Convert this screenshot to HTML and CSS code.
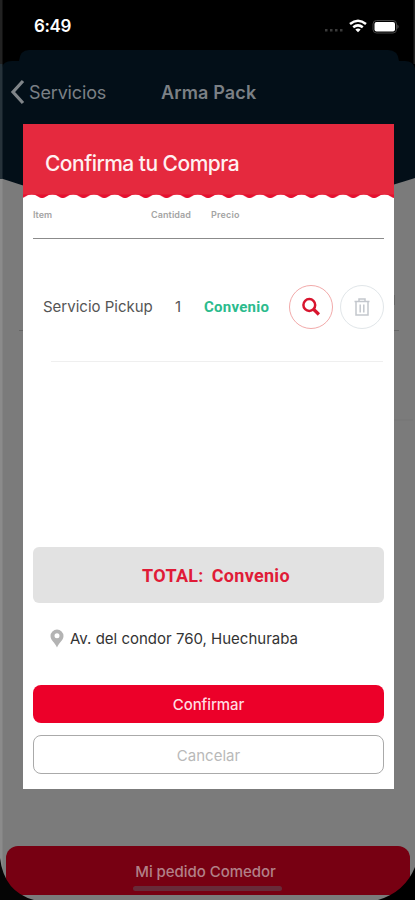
FILE: index.html
```html
<!DOCTYPE html>
<html lang="es">
<head>
<meta charset="utf-8">
<title>Confirma tu Compra</title>
<link rel="stylesheet" href="styles.css">
</head>
<body>
<div class="phone">
  <svg class="scene" viewBox="0 0 415 900" aria-hidden="true">
    <rect width="415" height="900" fill="#7b7b7b"/>
    <path d="M0 0H415V178Q393 185 375 190H40Q20 185 0 178Z" fill="#030f18"/>
    <path d="M0 0H415V68Q413 61 405 61H399Q398 50 388 50H29Q20 50 19 61H12Q3 61 2 68H0Z" fill="#000"/>
    <rect width="2.5" height="64" fill="#222"/>
    <rect y="64" width="2.5" height="115" fill="#26323a"/>
    <rect y="179" width="2.5" height="721" fill="#8b8b8b"/>
    <rect x="413.5" width="1.5" height="64" fill="#222"/>
    <path d="M19 330.500H23M393 330.500H399M394.500 295V305" stroke="#666" fill="none"/>
    <path d="M394 420H413" stroke="#777"/>
  </svg>
  <header class="status">
    <span class="time">6:49</span>
    <svg class="signals" width="78" height="18" viewBox="0 0 78 18" aria-hidden="true">
      <g fill="#3a3a3a"><rect x="3" y="11" width="2.500" height="2.500"/><rect x="8" y="11" width="2.500" height="2.500"/><rect x="13" y="11" width="2.500" height="2.500"/><rect x="18" y="11" width="2.500" height="2.500"/></g>
      <g fill="none" stroke="#fff" stroke-width="2.500"><path d="M28 6Q36 -.6 44 6"/><path d="M31.200 9.300Q36 5.500 40.800 9.300"/></g>
      <path d="M33.300 11.500Q36 9.300 38.700 11.500L36 14.200Z" fill="#fff"/>
      <rect x="51" y="2.500" width="23.500" height="12.500" rx="3.500" fill="none" stroke="#444"/>
      <rect x="52.500" y="4" width="20.500" height="9.500" rx="2" fill="#fff"/>
      <path d="M75.500 6.500Q77.500 8.700 75.500 11Z" fill="#666"/>
    </svg>
  </header>
  <nav class="nav">
    <svg width="16" height="26" viewBox="0 0 16 26" aria-hidden="true"><path d="M14 2L4 13L14 24" fill="none" stroke="#808589" stroke-width="3.200"/></svg>
    <span class="back">Servicios</span>
    <span class="title">Arma Pack</span>
  </nav>
  <footer class="order"><span>Mi pedido Comedor</span><i></i></footer>
  <svg class="corners" viewBox="0 0 415 50" aria-hidden="true"><path d="M0 8Q4 42 34 50H0Z" fill="#050505"/><path d="M415 17Q405 42 378 50H415Z" fill="#000"/></svg>

  <main class="modal">
    <div class="banner"><h1>Confirma tu Compra</h1></div>
    <svg class="wave" width="371" height="8" viewBox="0 0 371 8" aria-hidden="true">
      <defs><pattern id="scallop" x="-1.700" width="20.750" height="8" patternUnits="userSpaceOnUse"><path d="M0 0H20.750V5Q19 5.300 17.500 4Q10.400-.8 3.300 4Q1.700 5.300 0 5Z" fill="#e5102f"/></pattern></defs>
      <rect width="371" height="8" fill="url(#scallop)"/><rect width="371" height="1.500" fill="#e5293e"/>
    </svg>
    <div class="columns"><span>Item</span><span>Cantidad</span><span>Precio</span></div>
    <div class="item">
      <span class="name">Servicio Pickup</span>
      <span class="count">1</span>
      <strong class="price">Convenio</strong>
      <span class="round view"><svg width="20" height="20" viewBox="0 0 20 20" aria-hidden="true"><circle cx="8.300" cy="8" r="5.900" fill="none" stroke="#d8152e" stroke-width="2.500"/><path d="M12.300 12L17.900 17.500" stroke="#d8152e" stroke-width="3.200"/></svg></span>
      <span class="round trash"><svg width="18" height="20" viewBox="0 0 18 20" fill="none" stroke="#c3c7cd" stroke-width="1.500" aria-hidden="true"><path d="M1.500 4.500H16.500M6 4V2H12V4M3 5V18H15V5M7.200 7.500V15.500M10.800 7.500V15.500"/></svg></span>
    </div>
    <div class="total"><span>TOTAL:</span><span class="amount">Convenio</span></div>
    <div class="address">
      <svg width="14" height="19" viewBox="0 0 14 19" aria-hidden="true"><path fill-rule="evenodd" d="M7 .5A6.500 6.500 0 0 1 13.500 7C13.500 11.500 9 13.500 7 18.500C5 13.500.5 11.500.5 7A6.500 6.500 0 0 1 7 .5ZM7 4.300A2.500 2.500 0 1 0 7 9.300A2.500 2.500 0 1 0 7 4.300Z" fill="#b3b3b3"/></svg>
      <span>Av. del condor 760, Huechuraba</span>
    </div>
    <button class="confirm">Confirmar</button>
    <button class="cancel">Cancelar</button>
  </main>
</div>
</body>
</html>
```
FILE: styles.css
```css
* { box-sizing: border-box; }
body { margin: 0; font-family: Inter, sans-serif; }
svg { display: block; flex: none; }
span, strong { white-space: nowrap; }
.phone { position: relative; width: 415px; height: 900px; overflow: hidden; display: flex; flex-direction: column; }
.scene { position: absolute; inset: 0; width: 415px; height: 900px; }
.status { position: relative; height: 54px; display: flex; justify-content: space-between; padding: 16px 14px 0 34px; color: #fff; }
.time { font-size: 17px; line-height: 21px; font-weight: 600; letter-spacing: -.4px; }
.signals { margin: 2px 1px 0 0; }
.nav { position: relative; display: flex; align-items: center; height: 76px; padding-left: 9px; color: #7b8085; font-size: 18px; }
.back { width: 132px; margin-left: 4px; font-size: 18px; letter-spacing: -.15px; }
.title { font-weight: 600; letter-spacing: .15px; }
.order { position: relative; margin: auto 5px 5px 6px; height: 49px; border-radius: 12px; background: #770012; color: #b28088; text-align: center; padding: 16px 5px 0 0; font-size: 15px; line-height: 20px; font-weight: 500; letter-spacing: -.05px; }
.order i { display: block; width: 149px; height: 5px; border-radius: 3px; background: #682b39; margin: 4px auto 0; transform: translateX(2px); }
.corners { position: absolute; bottom: 0; left: 0; width: 415px; height: 50px; }
.modal { position: absolute; left: 23px; top: 124px; width: 371px; height: 665px; background: #fff; display: flex; flex-direction: column; }
.banner { height: 70px; background: #e5293e; padding: 26px 22px 0; }
h1 { margin: 0; color: #fff0f1; font-size: 21px; line-height: 28px; font-weight: 500; letter-spacing: -.53px; white-space: nowrap; }
.wave { width: 371px; margin-top: -1px; }
.columns { display: grid; grid-template-columns: 118px 60px 1fr; height: 38px; margin: 0 10px; padding-top: 8px; border-bottom: 1px solid #8b8b8b; color: #a4a4a4; font-size: 9px; line-height: 12px; font-weight: 600; }
.columns span:nth-child(2) { letter-spacing: .1px; }
.columns span:nth-child(3) { letter-spacing: .2px; }
.item { display: flex; align-items: center; height: 110px; margin: 13px 10px 0 20px; font-size: 15px; line-height: 18px; color: #555; background: linear-gradient(#efefef, #efefef) 8px 109px / 332px 1px no-repeat; }
.name { width: 132px; }
.count { width: 29px; }
.price { width: 85px; color: #2bbb8d; font: 700 15px Roboto, sans-serif; letter-spacing: .25px; }
.round { width: 44px; height: 44px; flex: none; border: 1px solid #f2aaaa; border-radius: 50%; display: grid; place-items: center; }
.trash { border-color: #e1e6e9; margin-left: 7px; }
.total { margin: 185px 10px 0; height: 56px; border-radius: 6px; background: #e2e2e2; color: #e01b37; display: flex; align-items: center; justify-content: center; gap: 8px; padding-left: 15px; font: 700 18px Roboto, sans-serif; letter-spacing: .3px; }
.address { display: flex; align-items: center; height: 20px; margin: 25px 0 0 27px; gap: 6px; color: #333; font-size: 15px; }
button { display: block; flex: none; height: 39px; margin: 0 10px; border: 0; border-radius: 8px; font: 500 15px Inter, sans-serif; padding: 0; }
.confirm { margin-top: 37px; height: 38px; background: #ec0029; color: #ffdce0; letter-spacing: -.1px; }
.cancel { margin-top: 12px; background: #fff; border: 1px solid #aaa; color: #b9b9b9; font-weight: 400; padding-top: 1px; }
```
